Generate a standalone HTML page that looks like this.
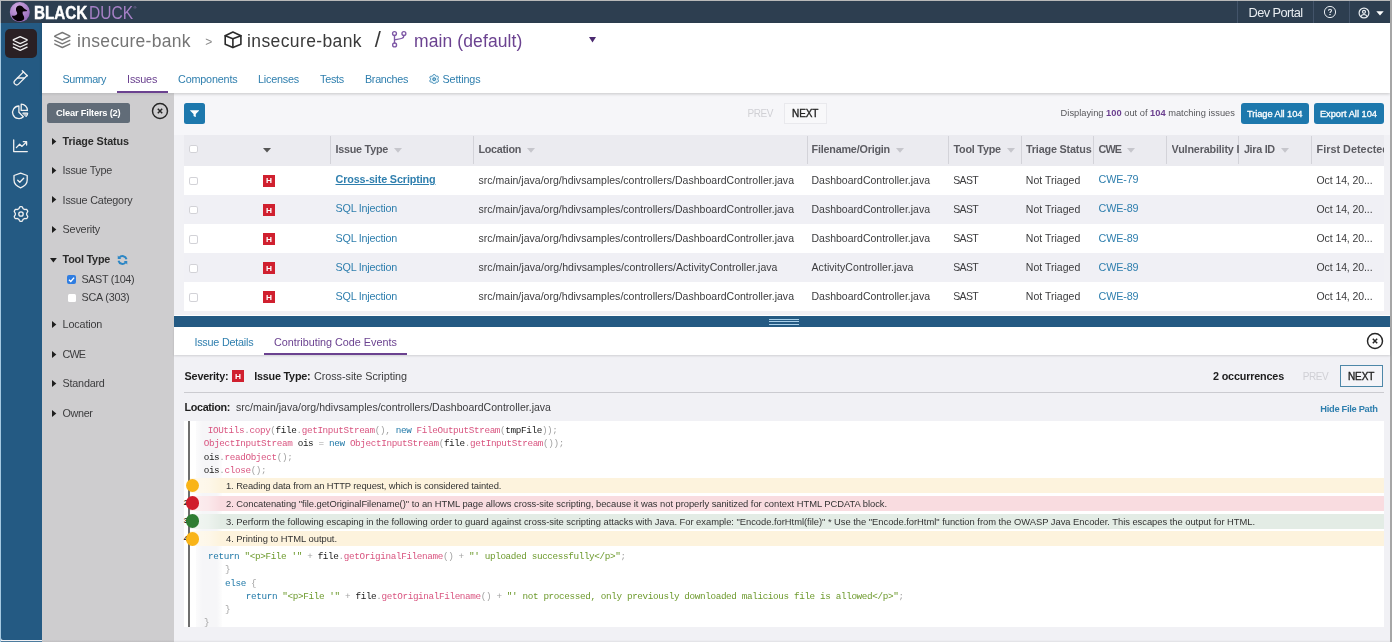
<!DOCTYPE html><html><head><meta charset="utf-8"><title>Black Duck - Issues</title><style>
html,body{margin:0;padding:0}
body{width:1392px;height:642px;overflow:hidden;position:relative;background:#efeff4;font-family:"Liberation Sans",sans-serif}
#app{position:absolute;left:0;top:0;width:1392px;height:642px;overflow:hidden}
#app div,#app span.t,#app svg{position:absolute}
.t{white-space:nowrap;display:block;filter:blur(.32px)}
#app svg{filter:blur(.25px)}
.m{font-family:"Liberation Mono",monospace}

</style></head><body><div id="app">
<div style="left:0px;top:0px;width:1392px;height:642px;background:#f1f1f5;"></div>
<div style="left:174px;top:93px;width:1216px;height:42px;background:#f6f6f9;"></div>
<div style="left:1.2px;top:1.2px;width:1388.8px;height:22.1px;background:#2d3e50;"></div>
<div style="left:1.2px;top:23.3px;width:40.8px;height:617.2px;background:#245a83;border-radius:0 0 0 2px;"></div>
<div style="left:42px;top:23.3px;width:1348px;height:69.4px;background:#fff;box-shadow:0 1px 3px rgba(0,0,0,.2);"></div>
<div style="left:42px;top:92.7px;width:132px;height:549.3px;background:#cecdcf;background:linear-gradient(#bdbdbf,#cecdcf 3px);"></div>
<div style="left:42px;top:639.5px;width:1348px;height:2.5px;background:linear-gradient(rgba(0,0,0,0),rgba(0,0,0,.07));"></div>
<div style="left:0px;top:0px;width:1392px;height:1.2px;background:#b9b9b9;"></div>
<div style="left:0px;top:0px;width:1.2px;height:23.3px;background:#b3b8bd;"></div>
<div style="left:0px;top:23.3px;width:1.2px;height:618.7px;background:#a5c9e1;"></div>
<div style="left:1390px;top:0px;width:2px;height:642px;background:#a6a6a6;"></div>
<div style="left:1.2px;top:640.5px;width:40.8px;height:1.5px;background:#4d7c9e;"></div>
<div style="left:1237px;top:1px;width:1px;height:22px;background:#43546a;"></div>
<div style="left:1313px;top:1px;width:1px;height:22px;background:#43546a;"></div>
<div style="left:1348.5px;top:1px;width:1.0px;height:22px;background:#43546a;"></div>
<svg style="left:9px;top:1px" width="22" height="22" viewBox="0 0 22 22"><defs><radialGradient id="lg" cx="40%" cy="25%" r="80%"><stop offset="0" stop-color="#cfa9e0"/><stop offset="1" stop-color="#9466b8"/></radialGradient></defs><circle cx="10.800" cy="11.100" r="10" fill="url(#lg)"/><path d="M7 7.500C7.500 4.500 11 3.800 13 5.200c1.200.8 1.800 2 2.500 2.600l2.700 1.800c.1.600-.7.800-1.700.7l-2.700.3c-.4 1.200-.2 2.400.5 3.600.9 1.500 1.100 2.800.7 4.100-1.500 2-5.500 2.700-8.500 1-1.900-1.300-3.300-3-3.800-4.900 1.800.5 3.800.2 5.100-1 .7-.8.4-1.700-.2-2.600-.6-1-.8-2.200-.6-3.300z" fill="#0a0208"/></svg>
<svg style="left:1323.100px;top:5px" width="14" height="14" viewBox="0 0 14 14" fill="none" stroke="#e8ecf0" stroke-width="1"><circle cx="7" cy="7" r="5.600"/><path d="M5.500 5.700c0-.9.700-1.500 1.500-1.500s1.500.6 1.500 1.400c0 1.100-1.500 1.200-1.500 2.400" stroke-width="1.100"/><circle cx="7" cy="9.700" r=".35" fill="#e8ecf0"/></svg>
<svg style="left:1357px;top:5.500px" width="14" height="14" viewBox="0 0 14 14" fill="none" stroke="#e8ecf0" stroke-width="1.200"><circle cx="7" cy="7" r="4.900"/><circle cx="7" cy="5.800" r="1.500"/><path d="M3.900 10.600c.6-1.500 1.700-2.100 3.100-2.100s2.500.6 3.100 2.100"/></svg>
<svg style="left:1376px;top:11.400px" width="8" height="5" viewBox="0 0 8 5"><path d="M.3.300h7.400L4 4.600z" fill="#fff"/></svg>
<div style="left:4.5px;top:29px;width:32.0px;height:28.5px;background:#2a2024;border-radius:5px;"></div>
<svg style="left:11px;top:34px" width="19" height="19" viewBox="0 0 19 19" fill="none" stroke="#f1f1f1" stroke-width="1.300" stroke-linecap="round" stroke-linejoin="round" stroke="#f5ebe6"><path d="M9.200 2.600l6.700 3.100c.4.200.4.600 0 .8l-6.700 3.100-6.700-3.100c-.4-.200-.4-.600 0-.8z"/><path d="M2.300 9.800l6.900 3.200 6.900-3.200"/><path d="M2.300 13.200l6.900 3.200 6.900-3.200"/></svg>
<svg style="left:11px;top:68.300px" width="19" height="19" viewBox="0 0 19 19" fill="none" stroke="#f1f1f1" stroke-width="1.300" stroke-linecap="round" stroke-linejoin="round"><path d="M11.300 2.700l5 5"/><path d="M12.500 3.900l-8.600 8.600a2.500 2.500 0 0 0 3.600 3.600l8.600-8.600"/><path d="M6.500 10h6.700"/></svg>
<svg style="left:10px;top:102px" width="20" height="20" viewBox="0 0 20 20" fill="none" stroke="#f1f1f1" stroke-width="1.300" stroke-linecap="round" stroke-linejoin="round"><path d="M8.900 4A6.300 6.300 0 1 0 13.350 14.750L8.900 10.300z"/><path d="M11.200 2.200A6.200 6.200 0 0 1 17.400 8.400H11.200z"/><path d="M13 11h4.800a5 5 0 0 1-1.400 3.500z" fill="rgba(241,241,241,.7)" stroke-width="1"/></svg>
<svg style="left:11px;top:136px" width="19" height="19" viewBox="0 0 19 19" fill="none" stroke="#f1f1f1" stroke-width="1.300" stroke-linecap="round" stroke-linejoin="round"><path d="M2.700 4v11.600h13.600"/><path d="M5.400 11.600l3.200-3.400 2.400 2.200 4.400-4.400"/><path d="M12.300 5.700h3.300v3.300"/></svg>
<svg style="left:11px;top:169.500px" width="20" height="20" viewBox="0 0 20 20" fill="none" stroke="#f1f1f1" stroke-width="1.300" stroke-linecap="round" stroke-linejoin="round"><path d="M9.600 3.200l6.600 2.300v4.600c0 3.600-2.700 6.300-6.600 7.700-3.900-1.400-6.600-4.100-6.600-7.700V5.500z"/><path d="M6.700 10.200l2.100 2.100 3.900-4.100"/></svg>
<svg style="left:12.500px;top:205.900px" width="16" height="16" viewBox="0 0 16 16" fill="none" stroke="#f1f1f1" stroke-width="1.300" stroke-linecap="round" stroke-linejoin="round"><path d="M8.00 0.70L8.48 0.72L8.95 0.81L9.38 1.07L9.68 1.72L9.91 2.38L10.20 2.69L10.52 2.88L10.85 3.06L11.17 3.25L11.50 3.44L11.91 3.54L12.60 3.40L13.31 3.34L13.75 3.59L14.06 3.95L14.32 4.35L14.54 4.77L14.70 5.23L14.69 5.73L14.28 6.32L13.82 6.84L13.70 7.25L13.70 7.63L13.70 8.00L13.70 8.37L13.70 8.75L13.82 9.16L14.28 9.68L14.69 10.27L14.70 10.77L14.54 11.23L14.32 11.65L14.06 12.05L13.75 12.41L13.31 12.66L12.60 12.60L11.91 12.46L11.50 12.56L11.17 12.75L10.85 12.94L10.52 13.12L10.20 13.31L9.91 13.62L9.68 14.28L9.38 14.93L8.95 15.19L8.48 15.28L8.00 15.30L7.52 15.28L7.05 15.19L6.62 14.93L6.32 14.28L6.09 13.62L5.80 13.31L5.48 13.12L5.15 12.94L4.83 12.75L4.50 12.56L4.09 12.46L3.40 12.60L2.69 12.66L2.25 12.41L1.94 12.05L1.68 11.65L1.46 11.23L1.30 10.77L1.31 10.27L1.72 9.68L2.18 9.16L2.30 8.75L2.30 8.37L2.30 8.00L2.30 7.63L2.30 7.25L2.18 6.84L1.72 6.32L1.31 5.73L1.30 5.23L1.46 4.77L1.68 4.35L1.94 3.95L2.25 3.59L2.69 3.34L3.40 3.40L4.09 3.54L4.50 3.44L4.83 3.25L5.15 3.06L5.48 2.88L5.80 2.69L6.09 2.38L6.32 1.72L6.62 1.07L7.05 0.81L7.52 0.72z"/><circle cx="8" cy="8" r="2.200"/></svg>
<svg style="left:52px;top:30px" width="21" height="20" viewBox="52 30 21 20" fill="none" stroke="#787878" stroke-width="1.400" stroke-linecap="round" stroke-linejoin="round"><path d="M62.300 32.500l7.300 3.300c.5.200.5.700 0 .9l-7.300 3.300-7.300-3.300c-.5-.200-.5-.700 0-.9z"/><path d="M54.800 40.400l7.500 3.400 7.500-3.400"/><path d="M54.800 44.100l7.500 3.400 7.500-3.400"/></svg>
<svg style="left:220px;top:28px" width="26" height="24" viewBox="220 28 26 24" fill="none" stroke="#2b2b2b" stroke-width="1.600" stroke-linecap="round" stroke-linejoin="round"><path d="M232.900 32l8 3.700v8.500l-8 3.300-7.700-3.300v-8.500z"/><path d="M225.200 35.700l7.700 3 8-3"/><path d="M232.900 38.700v8.700"/></svg>
<svg style="left:388px;top:28px" width="22" height="24" viewBox="388 28 22 24" fill="none" stroke="#7e58a6" stroke-width="1.350" stroke-linecap="round" stroke-linejoin="round"><circle cx="394.500" cy="33.500" r="1.950"/><circle cx="403.900" cy="33.500" r="1.950"/><circle cx="394.600" cy="44.900" r="1.950"/><path d="M394.500 35.500v7.400"/><path d="M403.900 35.500c0 3.300-3.500 3.300-9.300 4.400"/></svg>
<svg style="left:588.500px;top:36.500px" width="7" height="6" viewBox="0 0 7 6"><path d="M0 0h7L3.500 5.600z" fill="#4b2a70"/></svg>
<svg style="left:428.500px;top:73.500px" width="10.400" height="10.400" viewBox="0 0 24 24" fill="#e4f4fa" stroke="#2f7fae" stroke-width="2.300" stroke-linejoin="round"><path d="M12.00 1.00L12.72 1.05L13.42 1.24L14.05 1.69L14.54 2.53L14.92 3.39L15.35 3.92L15.82 4.26L16.30 4.55L16.79 4.83L17.32 5.06L17.99 5.17L18.93 5.07L19.90 5.07L20.61 5.39L21.12 5.90L21.53 6.50L21.84 7.15L22.03 7.85L21.95 8.62L21.47 9.46L20.91 10.23L20.67 10.86L20.61 11.44L20.60 12.00L20.61 12.56L20.67 13.14L20.91 13.77L21.47 14.54L21.95 15.38L22.03 16.15L21.84 16.85L21.53 17.50L21.12 18.10L20.61 18.61L19.90 18.93L18.93 18.93L17.99 18.83L17.32 18.94L16.79 19.17L16.30 19.45L15.82 19.74L15.35 20.08L14.92 20.61L14.54 21.47L14.05 22.31L13.42 22.76L12.72 22.95L12.00 23.00L11.28 22.95L10.58 22.76L9.95 22.31L9.46 21.47L9.08 20.61L8.65 20.08L8.18 19.74L7.70 19.45L7.21 19.17L6.68 18.94L6.01 18.83L5.07 18.93L4.10 18.93L3.39 18.61L2.88 18.10L2.47 17.50L2.16 16.85L1.97 16.15L2.05 15.38L2.53 14.54L3.09 13.77L3.33 13.14L3.39 12.56L3.40 12.00L3.39 11.44L3.33 10.86L3.09 10.23L2.53 9.46L2.05 8.62L1.97 7.85L2.16 7.15L2.47 6.50L2.88 5.90L3.39 5.39L4.10 5.07L5.07 5.07L6.01 5.17L6.68 5.06L7.21 4.83L7.70 4.55L8.18 4.26L8.65 3.92L9.08 3.39L9.46 2.53L9.95 1.69L10.58 1.24L11.28 1.05z"/><circle cx="12" cy="12" r="3.300" fill="#2f7fae" fill-opacity=".35"/></svg>
<div style="left:117px;top:91px;width:50.5px;height:1.9000000000000057px;background:#6b4290;"></div>
<div style="left:47.1px;top:103px;width:83.20000000000002px;height:20px;background:#616c78;border-radius:2.500px;"></div>
<svg style="left:151.300px;top:102.100px" width="18" height="18" viewBox="0 0 18 18" fill="none" stroke="#262626" stroke-width="1.450"><circle cx="9" cy="9" r="7.500"/><path d="M6.800 6.800l4.400 4.400M11.200 6.800l-4.400 4.400" stroke-width="1.500"/></svg>
<svg style="left:52px;top:138.1px" width="5" height="7" viewBox="0 0 5 7"><path d="M0 0l4.300 3.500L0 7z" fill="#1d1d1d"/></svg>
<svg style="left:52px;top:166.8px" width="5" height="7" viewBox="0 0 5 7"><path d="M0 0l4.300 3.500L0 7z" fill="#1d1d1d"/></svg>
<svg style="left:52px;top:196.2px" width="5" height="7" viewBox="0 0 5 7"><path d="M0 0l4.300 3.500L0 7z" fill="#1d1d1d"/></svg>
<svg style="left:52px;top:225.5px" width="5" height="7" viewBox="0 0 5 7"><path d="M0 0l4.300 3.500L0 7z" fill="#1d1d1d"/></svg>
<svg style="left:50px;top:257.8px" width="7" height="5" viewBox="0 0 7 5"><path d="M0 0h6.800L3.400 4.500z" fill="#1d1d1d"/></svg>
<svg style="left:116.500px;top:254.700px" width="11" height="10" viewBox="0 0 22 20" fill="none" stroke="#2b86c5" stroke-width="4"><path d="M19 8.500A8.200 8.200 0 0 0 4.500 5.500"/><path d="M3 11.500A8.200 8.200 0 0 0 17.500 14.500"/><path d="M1.500 1v7h7z" fill="#2b86c5" stroke="none"/><path d="M20.500 19v-7h-7z" fill="#2b86c5" stroke="none"/></svg>
<div style="left:67px;top:275px;width:9px;height:9px;background:#2f7de1;border-radius:2px;"></div>
<svg style="left:67px;top:275px" width="9" height="9" viewBox="0 0 9 9" fill="none" stroke="#fff" stroke-width="1.400"><path d="M2 4.700l1.800 1.800 3.300-3.900"/></svg>
<div style="left:67.5px;top:294px;width:8.0px;height:7.699999999999989px;background:#fff;border-radius:1.500px;"></div>
<svg style="left:52px;top:320.9px" width="5" height="7" viewBox="0 0 5 7"><path d="M0 0l4.300 3.500L0 7z" fill="#1d1d1d"/></svg>
<svg style="left:52px;top:350.7px" width="5" height="7" viewBox="0 0 5 7"><path d="M0 0l4.300 3.500L0 7z" fill="#1d1d1d"/></svg>
<svg style="left:52px;top:379.6px" width="5" height="7" viewBox="0 0 5 7"><path d="M0 0l4.300 3.500L0 7z" fill="#1d1d1d"/></svg>
<svg style="left:52px;top:409.5px" width="5" height="7" viewBox="0 0 5 7"><path d="M0 0l4.300 3.500L0 7z" fill="#1d1d1d"/></svg>
<div style="left:184.3px;top:103.1px;width:20.299999999999983px;height:20.80000000000001px;background:#1d78ad;border-radius:2.500px;"></div>
<svg style="left:189.700px;top:109.900px" width="9.300" height="7.500" viewBox="0 0 10 8.400" preserveAspectRatio="none"><path d="M.4.300h9.200c.3 0 .4.300.2.500L6.200 4.600v3.600L3.800 6.600V4.600L.2.800C0 .6.100.3.400.300z" fill="#fff"/></svg>
<div style="left:784.2px;top:103.2px;width:42.69999999999993px;height:21.200000000000003px;background:#f8f8fa;box-shadow:inset 0 0 0 1px #e9e9ed;"></div>
<div style="left:1240.5px;top:103px;width:68.40000000000009px;height:21px;background:#1d78ad;border-radius:3px;"></div>
<div style="left:1314px;top:103px;width:69.59999999999991px;height:21px;background:#1d78ad;border-radius:3px;"></div>
<div style="left:184px;top:135px;width:1200px;height:30.599999999999994px;background:#ebebf0;"></div>
<div style="left:184px;top:165.6px;width:1200px;height:29.099999999999994px;background:#fff;"></div>
<div style="left:184px;top:194.7px;width:1200px;height:29.200000000000017px;background:#f0f0f5;"></div>
<div style="left:184px;top:223.9px;width:1200px;height:29.150000000000006px;background:#fff;"></div>
<div style="left:184px;top:253.05px;width:1200px;height:28.849999999999966px;background:#f0f0f5;"></div>
<div style="left:184px;top:281.9px;width:1200px;height:29.100000000000023px;background:#fff;"></div>
<div style="left:330.0px;top:135.5px;width:1.0px;height:28.5px;background:#d3d3d9;"></div>
<div style="left:473.0px;top:135.5px;width:1.0px;height:28.5px;background:#d3d3d9;"></div>
<div style="left:806.5px;top:135.5px;width:1.0px;height:28.5px;background:#d3d3d9;"></div>
<div style="left:948.0px;top:135.5px;width:1.0px;height:28.5px;background:#d3d3d9;"></div>
<div style="left:1020.5px;top:135.5px;width:1.0px;height:28.5px;background:#d3d3d9;"></div>
<div style="left:1093.0px;top:135.5px;width:1.0px;height:28.5px;background:#d3d3d9;"></div>
<div style="left:1165.5px;top:135.5px;width:1.0px;height:28.5px;background:#d3d3d9;"></div>
<div style="left:1238.3px;top:135.5px;width:1.0px;height:28.5px;background:#d3d3d9;"></div>
<div style="left:1310.8px;top:135.5px;width:1.0px;height:28.5px;background:#d3d3d9;"></div>
<div style="left:189.3px;top:145.3px;width:8.300000000000011px;height:8.199999999999989px;background:#fff;border-radius:2.200px;box-shadow:inset 0 0 0 1px #d2d2d7;"></div>
<svg style="left:262.800px;top:147.600px" width="8" height="5" viewBox="0 0 8 5"><path d="M0 0h8L4 4.600z" fill="#555"/></svg>
<svg style="left:394.4px;top:147.6px" width="8" height="5" viewBox="0 0 8 5"><path d="M0 0h8L4 4.700z" fill="#c6c6cc"/></svg>
<svg style="left:526.5px;top:147.6px" width="8" height="5" viewBox="0 0 8 5"><path d="M0 0h8L4 4.700z" fill="#c6c6cc"/></svg>
<svg style="left:895.5px;top:147.6px" width="8" height="5" viewBox="0 0 8 5"><path d="M0 0h8L4 4.700z" fill="#c6c6cc"/></svg>
<svg style="left:1006.5px;top:147.6px" width="8" height="5" viewBox="0 0 8 5"><path d="M0 0h8L4 4.700z" fill="#c6c6cc"/></svg>
<svg style="left:1127px;top:147.6px" width="8" height="5" viewBox="0 0 8 5"><path d="M0 0h8L4 4.700z" fill="#c6c6cc"/></svg>
<svg style="left:1281.2px;top:147.6px" width="8" height="5" viewBox="0 0 8 5"><path d="M0 0h8L4 4.700z" fill="#c6c6cc"/></svg>
<div style="left:189.3px;top:177.14999999999998px;width:8.300000000000011px;height:8.199999999999989px;background:#fff;border-radius:2.200px;box-shadow:inset 0 0 0 1px #d2d2d7;"></div>
<div style="left:262.5px;top:175.04999999999998px;width:12.5px;height:12.099999999999994px;background:#d0202f;"></div>
<div style="left:189.3px;top:206.3px;width:8.300000000000011px;height:8.199999999999989px;background:#fff;border-radius:2.200px;box-shadow:inset 0 0 0 1px #d2d2d7;"></div>
<div style="left:262.5px;top:204.20000000000002px;width:12.5px;height:12.099999999999994px;background:#d0202f;"></div>
<div style="left:189.3px;top:235.47500000000002px;width:8.300000000000011px;height:8.199999999999989px;background:#fff;border-radius:2.200px;box-shadow:inset 0 0 0 1px #d2d2d7;"></div>
<div style="left:262.5px;top:233.37500000000003px;width:12.5px;height:12.099999999999994px;background:#d0202f;"></div>
<div style="left:189.3px;top:264.475px;width:8.300000000000011px;height:8.200000000000045px;background:#fff;border-radius:2.200px;box-shadow:inset 0 0 0 1px #d2d2d7;"></div>
<div style="left:262.5px;top:262.375px;width:12.5px;height:12.100000000000023px;background:#d0202f;"></div>
<div style="left:189.3px;top:293.45px;width:8.300000000000011px;height:8.200000000000045px;background:#fff;border-radius:2.200px;box-shadow:inset 0 0 0 1px #d2d2d7;"></div>
<div style="left:262.5px;top:291.34999999999997px;width:12.5px;height:12.100000000000023px;background:#d0202f;"></div>
<div style="left:174px;top:315.3px;width:1216px;height:1.0px;background:#fff;"></div>
<div style="left:174px;top:316.3px;width:1216px;height:10.599999999999966px;background:#245a83;"></div>
<div style="left:768.8px;top:319.1px;width:30.200000000000045px;height:0.8999999999999773px;background:#a9cfe8;"></div>
<div style="left:768.8px;top:321.2px;width:30.200000000000045px;height:0.8999999999999773px;background:#a9cfe8;"></div>
<div style="left:768.8px;top:323.5px;width:30.200000000000045px;height:0.8999999999999773px;background:#a9cfe8;"></div>
<div style="left:174px;top:326.9px;width:1216px;height:27.700000000000045px;background:#fff;box-shadow:0 1px 2px rgba(0,0,0,.14);"></div>
<div style="left:264px;top:353px;width:143px;height:1.8999999999999773px;background:#6b4290;"></div>
<svg style="left:1365.800px;top:331.850px" width="18" height="18" viewBox="0 0 18 18" fill="none" stroke="#262626" stroke-width="1.450"><circle cx="9" cy="9" r="7.500"/><path d="M6.800 6.800l4.400 4.400M11.200 6.800l-4.400 4.400" stroke-width="1.500"/></svg>
<div style="left:231.6px;top:370.2px;width:12.300000000000011px;height:12.0px;background:#d0202f;"></div>
<div style="left:1340px;top:365px;width:43px;height:21.600000000000023px;background:#f4f4f8;box-shadow:inset 0 0 0 1px #4d87a8;"></div>
<div style="left:184px;top:391.7px;width:1199.5px;height:1.1000000000000227px;background:#cbcbd0;"></div>
<div style="left:184.3px;top:420.5px;width:1199.7px;height:206.89999999999998px;background:#fff;"></div>
<div style="left:196px;top:420.5px;width:25.5px;height:206.89999999999998px;background:linear-gradient(90deg,#fbfbfc,#f6f6f8 25%,#f6f6f8 80%,#fdfdfd);"></div>
<div style="left:188.3px;top:420.5px;width:1.8999999999999773px;height:206.89999999999998px;background:#6e6e6e;"></div>
<div style="left:190px;top:478.1px;width:1194px;height:15.0px;background:#fdf3dd;"></div>
<div style="left:190px;top:478.1px;width:31px;height:15.0px;background:linear-gradient(90deg,rgba(255,255,255,.55),rgba(255,255,255,.35) 60%,rgba(255,255,255,0));"></div>
<div style="left:185.6px;top:478.70000000000005px;width:13.800000000000011px;height:13.799999999999955px;background:#f9b418;border-radius:50%;"></div>
<div style="left:190px;top:495.6px;width:1194px;height:15.0px;background:#f9dce0;"></div>
<div style="left:190px;top:495.6px;width:31px;height:15.0px;background:linear-gradient(90deg,rgba(255,255,255,.55),rgba(255,255,255,.35) 60%,rgba(255,255,255,0));"></div>
<div style="left:183.700px;top:498.1px;font-size:8px;line-height:10px;font-weight:700;color:#222">2</div>
<div style="left:185.6px;top:496.20000000000005px;width:13.800000000000011px;height:13.799999999999955px;background:#d01c2b;border-radius:50%;"></div>
<div style="left:190px;top:514px;width:1194px;height:14.700000000000045px;background:#e3ece5;"></div>
<div style="left:190px;top:514px;width:31px;height:14.700000000000045px;background:linear-gradient(90deg,rgba(255,255,255,.55),rgba(255,255,255,.35) 60%,rgba(255,255,255,0));"></div>
<div style="left:183.700px;top:516px;font-size:8px;line-height:10px;font-weight:700;color:#222">3</div>
<div style="left:185.6px;top:514.1px;width:13.800000000000011px;height:13.799999999999955px;background:#2f7d33;border-radius:50%;"></div>
<div style="left:190px;top:531.25px;width:1194px;height:15.0px;background:#fdf3dd;"></div>
<div style="left:190px;top:531.25px;width:31px;height:15.0px;background:linear-gradient(90deg,rgba(255,255,255,.55),rgba(255,255,255,.35) 60%,rgba(255,255,255,0));"></div>
<div style="left:183.700px;top:533.75px;font-size:8px;line-height:10px;font-weight:700;color:#222">4</div>
<div style="left:185.6px;top:531.85px;width:13.800000000000011px;height:13.799999999999955px;background:#f9b418;border-radius:50%;"></div>
<span class="t" style="left:33.8px;top:0px;font-size:19px;line-height:25px;color:#fff;font-weight:700;transform:scaleX(.8);transform-origin:0 50%;-webkit-text-stroke:.45px #fff;">BLACK</span>
<span class="t" style="left:89px;top:0px;font-size:19px;line-height:25px;color:#a680c6;font-weight:400;transform:scaleX(.818);transform-origin:0 50%;">DUCK</span>
<span class="t" style="left:133.5px;top:5px;font-size:4px;line-height:5px;color:#a982c8;font-weight:400;">®</span>
<span class="t" style="left:1248.6px;top:4px;font-size:12.8px;line-height:17px;color:#e8ecf0;font-weight:400;letter-spacing:-0.575px;">Dev Portal</span>
<span class="t" style="left:77.1px;top:30px;font-size:17.5px;line-height:23px;color:#757575;font-weight:400;letter-spacing:0.298px;">insecure-bank</span>
<span class="t" style="left:205.3px;top:34px;font-size:12px;line-height:16px;color:#8a8a8a;font-weight:400;letter-spacing:-0.816px;">&gt;</span>
<span class="t" style="left:247px;top:30px;font-size:17.5px;line-height:23px;color:#3a3a3a;font-weight:400;letter-spacing:0.391px;">insecure-bank</span>
<span class="t" style="left:374.8px;top:25px;font-size:22px;line-height:29px;color:#3a3a3a;font-weight:400;letter-spacing:-0.125px;">/</span>
<span class="t" style="left:414px;top:30px;font-size:17.5px;line-height:23px;color:#6b4290;font-weight:400;letter-spacing:0.107px;">main (default)</span>
<span class="t" style="left:62.5px;top:72px;font-size:10.8px;line-height:14px;color:#2f7fae;font-weight:400;letter-spacing:-0.372px;">Summary</span>
<span class="t" style="left:127.1px;top:72px;font-size:10.8px;line-height:14px;color:#6b4290;font-weight:400;letter-spacing:-0.203px;">Issues</span>
<span class="t" style="left:178px;top:72px;font-size:10.8px;line-height:14px;color:#2f7fae;font-weight:400;letter-spacing:-0.172px;">Components</span>
<span class="t" style="left:258px;top:72px;font-size:10.8px;line-height:14px;color:#2f7fae;font-weight:400;letter-spacing:-0.203px;">Licenses</span>
<span class="t" style="left:320px;top:72px;font-size:10.8px;line-height:14px;color:#2f7fae;font-weight:400;letter-spacing:-0.241px;">Tests</span>
<span class="t" style="left:365px;top:72px;font-size:10.8px;line-height:14px;color:#2f7fae;font-weight:400;letter-spacing:-0.328px;">Branches</span>
<span class="t" style="left:442.5px;top:72px;font-size:10.8px;line-height:14px;color:#2f7fae;font-weight:400;letter-spacing:-0.127px;">Settings</span>
<span class="t" style="left:56.1px;top:107px;font-size:9.3px;line-height:12px;color:#fff;font-weight:700;letter-spacing:-0.193px;">Clear Filters (2)</span>
<span class="t" style="left:62.6px;top:134px;font-size:10.8px;line-height:14px;color:#2b2b2b;font-weight:700;letter-spacing:-0.116px;">Triage Status</span>
<span class="t" style="left:62.6px;top:163px;font-size:10.8px;line-height:14px;color:#3c3c3e;font-weight:400;letter-spacing:-0.263px;">Issue Type</span>
<span class="t" style="left:62.6px;top:193px;font-size:10.8px;line-height:14px;color:#3c3c3e;font-weight:400;letter-spacing:-0.195px;">Issue Category</span>
<span class="t" style="left:62.6px;top:222px;font-size:10.8px;line-height:14px;color:#3c3c3e;font-weight:400;letter-spacing:-0.202px;">Severity</span>
<span class="t" style="left:62.6px;top:252px;font-size:10.8px;line-height:14px;color:#2b2b2b;font-weight:700;letter-spacing:-0.210px;">Tool Type</span>
<span class="t" style="left:81.4px;top:272px;font-size:10.8px;line-height:14px;color:#3c3c3e;font-weight:400;letter-spacing:-0.337px;">SAST (104)</span>
<span class="t" style="left:81.4px;top:290px;font-size:10.8px;line-height:14px;color:#3c3c3e;font-weight:400;letter-spacing:-0.190px;">SCA (303)</span>
<span class="t" style="left:62.6px;top:317px;font-size:10.8px;line-height:14px;color:#3c3c3e;font-weight:400;letter-spacing:-0.154px;">Location</span>
<span class="t" style="left:62.6px;top:347px;font-size:10.8px;line-height:14px;color:#3c3c3e;font-weight:400;letter-spacing:-0.934px;">CWE</span>
<span class="t" style="left:62.6px;top:376px;font-size:10.8px;line-height:14px;color:#3c3c3e;font-weight:400;letter-spacing:-0.229px;">Standard</span>
<span class="t" style="left:62.6px;top:406px;font-size:10.8px;line-height:14px;color:#3c3c3e;font-weight:400;letter-spacing:-0.383px;">Owner</span>
<span class="t" style="left:747.6px;top:107px;font-size:10px;line-height:13px;color:#d0d0d5;font-weight:400;letter-spacing:-0.459px;">PREV</span>
<span class="t" style="left:792px;top:107px;font-size:10px;line-height:13px;color:#222;font-weight:400;letter-spacing:-0.093px;-webkit-text-stroke:.35px #222;">NEXT</span>
<span class="t" style="left:1060.6px;top:107px;font-size:9.3px;line-height:12px;color:#58585c;font-weight:400;letter-spacing:0.002px;">Displaying <b style="color:#6b3f8f">100</b> out of <b style="color:#6b3f8f">104</b> matching issues</span>
<span class="t" style="left:1247px;top:108px;font-size:9.3px;line-height:12px;color:#fff;font-weight:400;letter-spacing:-0.080px;-webkit-text-stroke:.3px #fff;">Triage All 104</span>
<span class="t" style="left:1319.9px;top:108px;font-size:9.3px;line-height:12px;color:#fff;font-weight:400;letter-spacing:-0.020px;-webkit-text-stroke:.3px #fff;">Export All 104</span>
<span class="t" style="left:335.5px;top:142px;font-size:10.8px;line-height:14px;color:#5c5c62;font-weight:700;letter-spacing:-0.252px;">Issue Type</span>
<span class="t" style="left:478.5px;top:142px;font-size:10.8px;line-height:14px;color:#5c5c62;font-weight:700;letter-spacing:-0.312px;">Location</span>
<span class="t" style="left:811.5px;top:142px;font-size:10.8px;line-height:14px;color:#5c5c62;font-weight:700;letter-spacing:-0.206px;">Filename/Origin</span>
<span class="t" style="left:953.5px;top:142px;font-size:10.8px;line-height:14px;color:#5c5c62;font-weight:700;letter-spacing:-0.232px;">Tool Type</span>
<span class="t" style="left:1026px;top:142px;font-size:10.8px;line-height:14px;color:#5c5c62;font-weight:700;letter-spacing:-0.178px;">Triage Status</span>
<span class="t" style="left:1098.5px;top:142px;font-size:10.8px;line-height:14px;color:#5c5c62;font-weight:700;letter-spacing:-0.901px;">CWE</span>
<span class="t" style="left:1171.5px;top:142px;font-size:10.8px;line-height:14px;color:#5c5c62;font-weight:700;letter-spacing:-0.169px;width:67px;overflow:hidden;">Vulnerability ID</span>
<span class="t" style="left:1243.9px;top:142px;font-size:10.8px;line-height:14px;color:#5c5c62;font-weight:700;letter-spacing:-0.288px;">Jira ID</span>
<span class="t" style="left:1316.5px;top:142px;font-size:10.8px;line-height:14px;color:#5c5c62;font-weight:700;letter-spacing:0.036px;width:67.5px;overflow:hidden;">First Detected</span>
<span class="t" style="left:265.8px;top:177px;font-size:6.5px;line-height:8px;color:#fff;font-weight:700;transform:scaleX(1.28);transform-origin:0 50%;">H</span>
<span class="t" style="left:335.5px;top:172px;font-size:10.8px;line-height:14px;color:#2f7fae;font-weight:700;letter-spacing:-0.130px;text-decoration:underline;">Cross-site Scripting</span>
<span class="t" style="left:478.5px;top:173px;font-size:10.5px;line-height:14px;color:#3c3c3e;font-weight:400;letter-spacing:0.023px;">src/main/java/org/hdivsamples/controllers/DashboardController.java</span>
<span class="t" style="left:811.5px;top:173px;font-size:10.5px;line-height:14px;color:#3c3c3e;font-weight:400;letter-spacing:0.001px;">DashboardController.java</span>
<span class="t" style="left:953.3px;top:173px;font-size:10.5px;line-height:14px;color:#3c3c3e;font-weight:400;letter-spacing:-0.684px;">SAST</span>
<span class="t" style="left:1025.8px;top:173px;font-size:10.5px;line-height:14px;color:#3c3c3e;font-weight:400;letter-spacing:0.020px;">Not Triaged</span>
<span class="t" style="left:1098.5px;top:172px;font-size:10.8px;line-height:14px;color:#2f7fae;font-weight:400;letter-spacing:-0.133px;">CWE-79</span>
<span class="t" style="left:1316.5px;top:173px;font-size:10.5px;line-height:14px;color:#3c3c3e;font-weight:400;letter-spacing:-0.093px;">Oct 14, 20...</span>
<span class="t" style="left:265.8px;top:207px;font-size:6.5px;line-height:8px;color:#fff;font-weight:700;transform:scaleX(1.28);transform-origin:0 50%;">H</span>
<span class="t" style="left:335.5px;top:201px;font-size:10.8px;line-height:14px;color:#2f7fae;font-weight:400;letter-spacing:-0.225px;">SQL Injection</span>
<span class="t" style="left:478.5px;top:202px;font-size:10.5px;line-height:14px;color:#3c3c3e;font-weight:400;letter-spacing:0.023px;">src/main/java/org/hdivsamples/controllers/DashboardController.java</span>
<span class="t" style="left:811.5px;top:202px;font-size:10.5px;line-height:14px;color:#3c3c3e;font-weight:400;letter-spacing:0.001px;">DashboardController.java</span>
<span class="t" style="left:953.3px;top:202px;font-size:10.5px;line-height:14px;color:#3c3c3e;font-weight:400;letter-spacing:-0.684px;">SAST</span>
<span class="t" style="left:1025.8px;top:202px;font-size:10.5px;line-height:14px;color:#3c3c3e;font-weight:400;letter-spacing:0.020px;">Not Triaged</span>
<span class="t" style="left:1098.5px;top:201px;font-size:10.8px;line-height:14px;color:#2f7fae;font-weight:400;letter-spacing:-0.133px;">CWE-89</span>
<span class="t" style="left:1316.5px;top:202px;font-size:10.5px;line-height:14px;color:#3c3c3e;font-weight:400;letter-spacing:-0.093px;">Oct 14, 20...</span>
<span class="t" style="left:265.8px;top:236px;font-size:6.5px;line-height:8px;color:#fff;font-weight:700;transform:scaleX(1.28);transform-origin:0 50%;">H</span>
<span class="t" style="left:335.5px;top:231px;font-size:10.8px;line-height:14px;color:#2f7fae;font-weight:400;letter-spacing:-0.225px;">SQL Injection</span>
<span class="t" style="left:478.5px;top:231px;font-size:10.5px;line-height:14px;color:#3c3c3e;font-weight:400;letter-spacing:0.023px;">src/main/java/org/hdivsamples/controllers/DashboardController.java</span>
<span class="t" style="left:811.5px;top:231px;font-size:10.5px;line-height:14px;color:#3c3c3e;font-weight:400;letter-spacing:0.001px;">DashboardController.java</span>
<span class="t" style="left:953.3px;top:231px;font-size:10.5px;line-height:14px;color:#3c3c3e;font-weight:400;letter-spacing:-0.684px;">SAST</span>
<span class="t" style="left:1025.8px;top:231px;font-size:10.5px;line-height:14px;color:#3c3c3e;font-weight:400;letter-spacing:0.020px;">Not Triaged</span>
<span class="t" style="left:1098.5px;top:231px;font-size:10.8px;line-height:14px;color:#2f7fae;font-weight:400;letter-spacing:-0.133px;">CWE-89</span>
<span class="t" style="left:1316.5px;top:231px;font-size:10.5px;line-height:14px;color:#3c3c3e;font-weight:400;letter-spacing:-0.093px;">Oct 14, 20...</span>
<span class="t" style="left:265.8px;top:265px;font-size:6.5px;line-height:8px;color:#fff;font-weight:700;transform:scaleX(1.28);transform-origin:0 50%;">H</span>
<span class="t" style="left:335.5px;top:260px;font-size:10.8px;line-height:14px;color:#2f7fae;font-weight:400;letter-spacing:-0.225px;">SQL Injection</span>
<span class="t" style="left:478.5px;top:260px;font-size:10.5px;line-height:14px;color:#3c3c3e;font-weight:400;letter-spacing:0.048px;">src/main/java/org/hdivsamples/controllers/ActivityController.java</span>
<span class="t" style="left:811.5px;top:260px;font-size:10.5px;line-height:14px;color:#3c3c3e;font-weight:400;letter-spacing:0.071px;">ActivityController.java</span>
<span class="t" style="left:953.3px;top:260px;font-size:10.5px;line-height:14px;color:#3c3c3e;font-weight:400;letter-spacing:-0.684px;">SAST</span>
<span class="t" style="left:1025.8px;top:260px;font-size:10.5px;line-height:14px;color:#3c3c3e;font-weight:400;letter-spacing:0.020px;">Not Triaged</span>
<span class="t" style="left:1098.5px;top:260px;font-size:10.8px;line-height:14px;color:#2f7fae;font-weight:400;letter-spacing:-0.133px;">CWE-89</span>
<span class="t" style="left:1316.5px;top:260px;font-size:10.5px;line-height:14px;color:#3c3c3e;font-weight:400;letter-spacing:-0.093px;">Oct 14, 20...</span>
<span class="t" style="left:265.8px;top:294px;font-size:6.5px;line-height:8px;color:#fff;font-weight:700;transform:scaleX(1.28);transform-origin:0 50%;">H</span>
<span class="t" style="left:335.5px;top:289px;font-size:10.8px;line-height:14px;color:#2f7fae;font-weight:400;letter-spacing:-0.225px;">SQL Injection</span>
<span class="t" style="left:478.5px;top:289px;font-size:10.5px;line-height:14px;color:#3c3c3e;font-weight:400;letter-spacing:0.023px;">src/main/java/org/hdivsamples/controllers/DashboardController.java</span>
<span class="t" style="left:811.5px;top:289px;font-size:10.5px;line-height:14px;color:#3c3c3e;font-weight:400;letter-spacing:0.001px;">DashboardController.java</span>
<span class="t" style="left:953.3px;top:289px;font-size:10.5px;line-height:14px;color:#3c3c3e;font-weight:400;letter-spacing:-0.684px;">SAST</span>
<span class="t" style="left:1025.8px;top:289px;font-size:10.5px;line-height:14px;color:#3c3c3e;font-weight:400;letter-spacing:0.020px;">Not Triaged</span>
<span class="t" style="left:1098.5px;top:289px;font-size:10.8px;line-height:14px;color:#2f7fae;font-weight:400;letter-spacing:-0.133px;">CWE-89</span>
<span class="t" style="left:1316.5px;top:289px;font-size:10.5px;line-height:14px;color:#3c3c3e;font-weight:400;letter-spacing:-0.093px;">Oct 14, 20...</span>
<span class="t" style="left:194.4px;top:335px;font-size:10.8px;line-height:14px;color:#2f7fae;font-weight:400;letter-spacing:-0.216px;">Issue Details</span>
<span class="t" style="left:274px;top:335px;font-size:10.8px;line-height:14px;color:#6b4290;font-weight:400;letter-spacing:-0.010px;">Contributing Code Events</span>
<span class="t" style="left:184.6px;top:369px;font-size:10.8px;line-height:14px;color:#1d1d1d;font-weight:700;letter-spacing:-0.192px;">Severity:</span>
<span class="t" style="left:234.8px;top:373px;font-size:6.5px;line-height:8px;color:#fff;font-weight:700;transform:scaleX(1.28);transform-origin:0 50%;">H</span>
<span class="t" style="left:254.3px;top:369px;font-size:10.8px;line-height:14px;color:#1d1d1d;font-weight:700;letter-spacing:-0.228px;">Issue Type:</span>
<span class="t" style="left:313.9px;top:369px;font-size:10.8px;line-height:14px;color:#3c3c3e;font-weight:400;letter-spacing:-0.025px;">Cross-site Scripting</span>
<span class="t" style="left:1213px;top:369px;font-size:10.8px;line-height:14px;color:#1d1d1d;font-weight:700;letter-spacing:-0.172px;">2 occurrences</span>
<span class="t" style="left:1302.8px;top:370px;font-size:10px;line-height:13px;color:#d0d0d5;font-weight:400;letter-spacing:-0.434px;">PREV</span>
<span class="t" style="left:1348px;top:370px;font-size:10px;line-height:13px;color:#222;font-weight:400;letter-spacing:-0.118px;-webkit-text-stroke:.35px #222;">NEXT</span>
<span class="t" style="left:184.6px;top:400px;font-size:10.8px;line-height:14px;color:#1d1d1d;font-weight:700;letter-spacing:-0.355px;">Location:</span>
<span class="t" style="left:236px;top:400px;font-size:10.5px;line-height:14px;color:#3c3c3e;font-weight:400;letter-spacing:0.015px;">src/main/java/org/hdivsamples/controllers/DashboardController.java</span>
<span class="t" style="left:1320.3px;top:403px;font-size:9.3px;line-height:12px;color:#2f7fae;font-weight:700;letter-spacing:-0.299px;">Hide File Path</span>
<span class="t m" style="left:207.7px;top:425px;font-size:9.3px;line-height:12px;color:#1a1a1a;font-weight:400;letter-spacing:-0.360px;"><span style="color:#d95580">IOUtils</span><span style="color:#a3a3a3">.</span><span style="color:#d95580">copy</span><span style="color:#a3a3a3">(</span><span style="color:#1a1a1a">file</span><span style="color:#a3a3a3">.</span><span style="color:#d95580">getInputStream</span><span style="color:#a3a3a3">(), </span><span style="color:#2179a8">new </span><span style="color:#d95580">FileOutputStream</span><span style="color:#a3a3a3">(</span><span style="color:#1a1a1a">tmpFile</span><span style="color:#a3a3a3">));</span></span>
<span class="t m" style="left:203.7px;top:438px;font-size:9.3px;line-height:12px;color:#1a1a1a;font-weight:400;letter-spacing:-0.359px;"><span style="color:#d95580">ObjectInputStream</span><span style="color:#1a1a1a"> ois </span><span style="color:#a3a3a3">= </span><span style="color:#2179a8">new </span><span style="color:#d95580">ObjectInputStream</span><span style="color:#a3a3a3">(</span><span style="color:#1a1a1a">file</span><span style="color:#a3a3a3">.</span><span style="color:#d95580">getInputStream</span><span style="color:#a3a3a3">());</span></span>
<span class="t m" style="left:203.7px;top:452px;font-size:9.3px;line-height:12px;color:#1a1a1a;font-weight:400;letter-spacing:-0.361px;"><span style="color:#1a1a1a">ois</span><span style="color:#a3a3a3">.</span><span style="color:#d95580">readObject</span><span style="color:#a3a3a3">();</span></span>
<span class="t m" style="left:203.7px;top:465px;font-size:9.3px;line-height:12px;color:#1a1a1a;font-weight:400;letter-spacing:-0.362px;"><span style="color:#1a1a1a">ois</span><span style="color:#a3a3a3">.</span><span style="color:#d95580">close</span><span style="color:#a3a3a3">();</span></span>
<span class="t m" style="left:208px;top:551px;font-size:9.3px;line-height:12px;color:#1a1a1a;font-weight:400;letter-spacing:-0.359px;"><span style="color:#2179a8">return </span><span style="color:#6d9a2d">&quot;&lt;p&gt;File &#x27;&quot;</span><span style="color:#a3a3a3"> + </span><span style="color:#1a1a1a">file</span><span style="color:#a3a3a3">.</span><span style="color:#d95580">getOriginalFilename</span><span style="color:#a3a3a3">() + </span><span style="color:#6d9a2d">&quot;&#x27; uploaded successfully&lt;/p&gt;&quot;</span><span style="color:#a3a3a3">;</span></span>
<span class="t m" style="left:225px;top:564px;font-size:9.3px;line-height:12px;color:#1a1a1a;font-weight:400;letter-spacing:-0.373px;"><span style="color:#a3a3a3">}</span></span>
<span class="t m" style="left:225px;top:578px;font-size:9.3px;line-height:12px;color:#1a1a1a;font-weight:400;letter-spacing:-0.362px;"><span style="color:#2179a8">else </span><span style="color:#a3a3a3">{</span></span>
<span class="t m" style="left:245.8px;top:591px;font-size:9.3px;line-height:12px;color:#1a1a1a;font-weight:400;letter-spacing:-0.359px;"><span style="color:#2179a8">return </span><span style="color:#6d9a2d">&quot;&lt;p&gt;File &#x27;&quot;</span><span style="color:#a3a3a3"> + </span><span style="color:#1a1a1a">file</span><span style="color:#a3a3a3">.</span><span style="color:#d95580">getOriginalFilename</span><span style="color:#a3a3a3">() + </span><span style="color:#6d9a2d">&quot;&#x27; not processed, only previously downloaded malicious file is allowed&lt;/p&gt;&quot;</span><span style="color:#a3a3a3">;</span></span>
<span class="t m" style="left:225px;top:604px;font-size:9.3px;line-height:12px;color:#1a1a1a;font-weight:400;letter-spacing:-0.373px;"><span style="color:#a3a3a3">}</span></span>
<span class="t m" style="left:204.1px;top:617px;font-size:9.3px;line-height:12px;color:#1a1a1a;font-weight:400;letter-spacing:-0.373px;"><span style="color:#a3a3a3">}</span></span>
<span class="t" style="left:226px;top:480px;font-size:9.4px;line-height:12px;color:#333;font-weight:400;letter-spacing:-0.098px;">1. Reading data from an HTTP request, which is considered tainted.</span>
<span class="t" style="left:226px;top:498px;font-size:9.4px;line-height:12px;color:#333;font-weight:400;letter-spacing:-0.040px;">2. Concatenating &quot;file.getOriginalFilename()&quot; to an HTML page allows cross-site scripting, because it was not properly sanitized for context HTML PCDATA block.</span>
<span class="t" style="left:226px;top:516px;font-size:9.4px;line-height:12px;color:#333;font-weight:400;letter-spacing:-0.030px;">3. Perform the following escaping in the following order to guard against cross-site scripting attacks with Java. For example: &quot;Encode.forHtml(file)&quot; * Use the &quot;Encode.forHtml&quot; function from the OWASP Java Encoder. This escapes the output for HTML.</span>
<span class="t" style="left:226px;top:533px;font-size:9.4px;line-height:12px;color:#333;font-weight:400;letter-spacing:-0.025px;">4. Printing to HTML output.</span>
</div></body></html>
